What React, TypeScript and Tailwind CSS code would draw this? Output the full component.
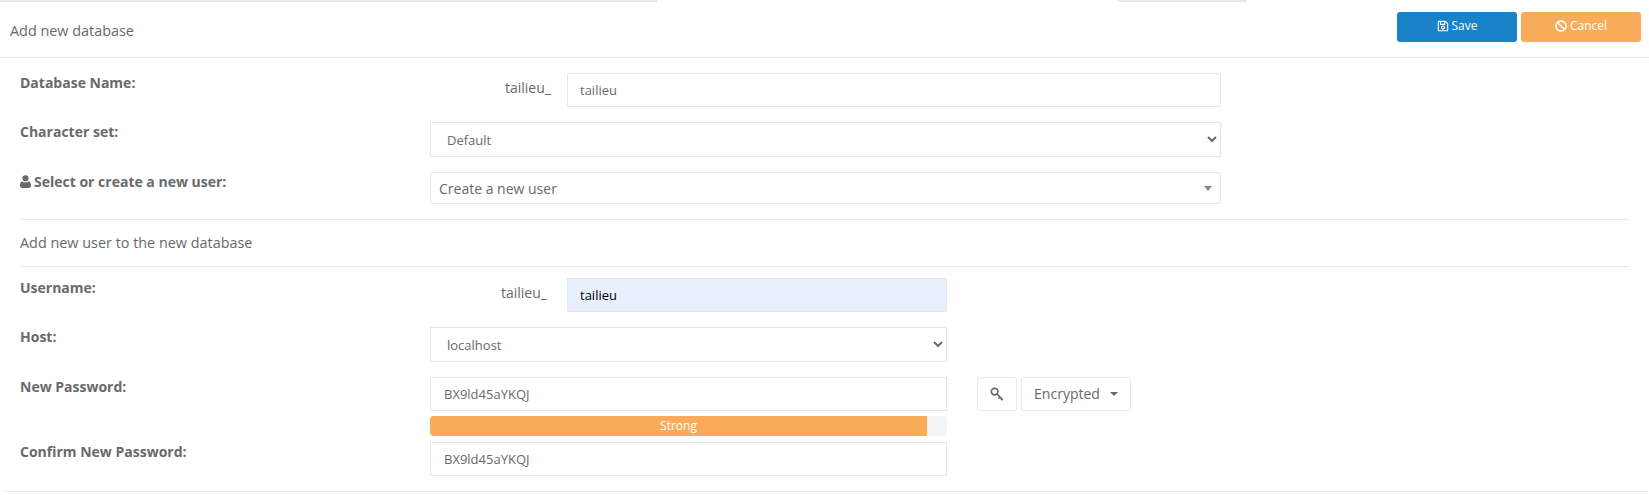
import React from 'react';
import { FaRegSave, FaBan } from 'react-icons/fa';

const fieldBase =
  'border border-[#e5e6e7] bg-white text-[13px] text-[#676a6c] outline-none';

const Label: React.FC<{ children: React.ReactNode }> = ({ children }) => (
  <div className="w-[410px] shrink-0 text-[14px] leading-[19px] font-bold text-[#676a6c]">{children}</div>
);

const Caret = () => (
  <span className="border-x-[4px] border-t-[4px] border-x-transparent border-t-[#676a6c]" />
);

const UserIcon = () => (
  <svg viewBox="0 0 11 13" className="h-[13px] w-[11px] fill-current">
    <circle cx="5.5" cy="3.3" r="3.1" />
    <path d="M2.2 6.2C3 7 4.2 7.4 5.5 7.4S8 7 8.8 6.2C10.2 6.7 11 8.2 11 10.6 11 12 10.2 13 9 13H2C.8 13 0 12 0 10.6 0 8.2.8 6.7 2.2 6.2Z" />
  </svg>
);

const KeyIcon = () => (
  <svg viewBox="0 0 14 14" className="h-[14px] w-[14px] fill-none stroke-current" strokeWidth="1.7">
    <circle cx="4.6" cy="4.6" r="3.3" />
    <path d="M7 7l5.8 5.8M10 10l-1.6 1.6M12 12l-1.2 1.2" />
  </svg>
);

export default function App() {
  return (
    <div className="relative h-[495px] w-[1649px] overflow-hidden bg-white font-['Open_Sans',sans-serif] text-[13px] text-[#676a6c]">
      {/* tab strip leftovers along the top */}
      <div className="flex h-[2px]">
        <div className="h-full w-[657px] bg-[#e7e7e7]" />
        <div className="h-full w-[461px]" />
        <div className="h-full w-[129px] bg-[#e7e7e7]" />
      </div>

      {/* Header */}
      <div className="flex h-[56px] items-start justify-between border-b border-[#e7eaec] pl-[10px] pr-[8px]">
        <div className="mt-[19px] text-[14.4px] leading-[19px]">Add new database</div>
        <div className="mt-[10px] flex gap-[4px]">
          <button className="flex h-[30px] w-[120px] items-center justify-center gap-[3px] rounded-[3px] bg-[#1a82c8] pb-[2px] text-[12px] text-white">
            <FaRegSave className="h-[12px] w-[12px]" /> Save
          </button>
          <button className="flex h-[30px] w-[120px] items-center justify-center gap-[3px] rounded-[3px] bg-[#f8ac59] pb-[2px] text-[12px] text-white">
            <FaBan className="h-[12px] w-[12px]" /> Cancel
          </button>
        </div>
      </div>

      {/* Database */}
      <div className="mx-[20px] mt-[15px]">
        <div className="flex">
          <Label>Database Name:</Label>
          <div className="mt-[5px] w-[137px] pl-[75px] text-[14px] leading-[19px]">tailieu_</div>
          <input readOnly value="tailieu" className={`${fieldBase} h-[34px] w-[654px] rounded-[1px] px-[12px]`} />
        </div>
        <div className="mt-[15px] flex">
          <Label>Character set:</Label>
          <select className={`${fieldBase} h-[35px] w-[791px] rounded-[1px] pl-[12px]`}>
            <option>Default</option>
          </select>
        </div>
        <div className="mt-[15px] flex h-[34px]">
          <Label>
            <span className="flex items-center gap-[3px]">
              <UserIcon /> Select or create a new user:
            </span>
          </Label>
          <div className={`${fieldBase} flex h-[32px] w-[791px] items-center justify-between rounded-[3px] px-[8px] text-[14px]`}>
            Create a new user
            <span className="border-x-[4px] border-t-[5px] border-x-transparent border-t-[#888888]" />
          </div>
        </div>

        <div className="mt-[13px] border-t border-[#e7eaec] pt-[13px] text-[14.4px] leading-[19px]">Add new user to the new database</div>
        <div className="mt-[14px] border-t border-[#e7eaec] pt-[11px]">
          <div className="flex">
            <Label>Username:</Label>
            <div className="mt-[5px] w-[137px] pl-[71px] text-[14px] leading-[19px]">tailieu_</div>
            <input readOnly value="tailieu" className="h-[34px] w-[380px] rounded-[1px] border border-[#e5e6e7] bg-[#e8f0fe] px-[12px] text-[13px] text-black outline-none" />
          </div>
          <div className="mt-[15px] flex">
            <Label>Host:</Label>
            <select className={`${fieldBase} h-[35px] w-[517px] rounded-[1px] pl-[12px]`}>
              <option>localhost</option>
            </select>
          </div>
          <div className="mt-[15px] flex">
            <Label>New Password:</Label>
            <div className="w-[517px]">
              <input readOnly value="BX9ld45aYKQJ" className={`${fieldBase} block h-[34px] w-full rounded-[1px] px-[13px]`} />
              <div className="mt-[5px] h-[20px] overflow-hidden rounded-[4px] bg-[#f5f5f5]">
                <div className="h-full w-[497px] bg-[#f8ac59] text-center text-[12px] leading-[20px] text-white">Strong</div>
              </div>
            </div>
            <button className="ml-[30px] flex h-[34px] w-[40px] items-center justify-center rounded-[3px] border border-[#e7eaec]">
              <KeyIcon />
            </button>
            <button className="ml-[4px] flex h-[34px] w-[110px] items-center justify-center gap-[10px] rounded-[3px] border border-[#e7eaec] pb-[1px] text-[14px]">
              Encrypted <Caret />
            </button>
          </div>
          <div className="mt-[6px] flex">
            <Label>Confirm New Password:</Label>
            <input readOnly value="BX9ld45aYKQJ" className={`${fieldBase} h-[34px] w-[517px] rounded-[1px] px-[13px]`} />
          </div>
        </div>
      </div>

      <div className="ml-[4px] mr-[2px] mt-[15px] border-t border-[#e7eaec]" />
    </div>
  );
}
